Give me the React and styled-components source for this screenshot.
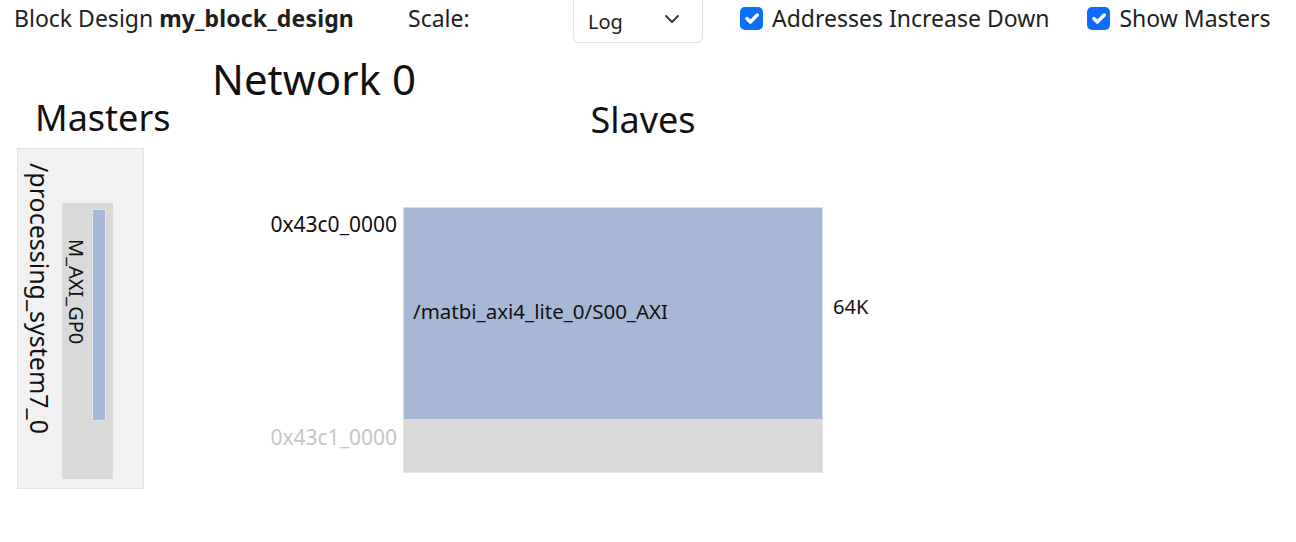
import React from "react";
//styling
import styled, { createGlobalStyle } from "styled-components";

const GlobalStyle = createGlobalStyle`
  body {
    margin: 0;
    background: #ffffff;
    color: #212529;
    font-family: "Noto Sans", "Open Sans", sans-serif;
  }
`;

const CheckMark = () => (
  <svg width="23" height="23" viewBox="0 0 20 20">
    <path
      d="m6 10 3 3 6-6"
      fill="none"
      stroke="#fff"
      strokeWidth="3"
      strokeLinecap="round"
      strokeLinejoin="round"
    />
  </svg>
);

const App = () => {
  return (
    <>
      <GlobalStyle />
      <Toolbar>
        <Title>
          Block Design <b>my_block_design</b>
        </Title>
        <ScaleLabel>Scale:</ScaleLabel>
        <Select>
          <span>Log</span>
          <svg width="16" height="16" viewBox="0 0 16 16">
            <path
              d="m2 5 6 6 6-6"
              fill="none"
              stroke="#343a40"
              strokeWidth="2"
              strokeLinecap="round"
              strokeLinejoin="round"
            />
          </svg>
        </Select>
        <Check gap={37}>
          <Box>
            <CheckMark />
          </Box>
          Addresses Increase Down
        </Check>
        <Check gap={38}>
          <Box>
            <CheckMark />
          </Box>
          Show Masters
        </Check>
      </Toolbar>
      <Main>
        <MastersCol>
          <Heading>Masters</Heading>
          <MasterPanel>
            <Vertical>/processing_system7_0</Vertical>
            <Port>
              <Vertical small>M_AXI_GP0</Vertical>
              <PortBar />
            </Port>
          </MasterPanel>
        </MastersCol>
        <NetworkCol>
          <NetworkTitle>Network 0</NetworkTitle>
          <SlavesHeading>Slaves</SlavesHeading>
          <MapRow>
            <Addr>0x43c0_0000</Addr>
            <Segment height={213} used>
              /matbi_axi4_lite_0/S00_AXI
            </Segment>
            <Size>64K</Size>
          </MapRow>
          <MapRow>
            <Addr muted>0x43c1_0000</Addr>
            <Segment height={53} />
          </MapRow>
        </NetworkCol>
      </Main>
    </>
  );
};

const Toolbar = styled.div`
  display: flex;
  align-items: center;
  height: 36px;
  padding-left: 14px;
  font-size: 23px;
  white-space: nowrap;
  color: #1e1e1e;
`;

const Title = styled.div`
  width: 394px;
  b {
    font-weight: 700;
    letter-spacing: 0.15px;
  }
`;

const ScaleLabel = styled.div`
  width: 165px;
`;

const Select = styled.div`
  box-sizing: border-box;
  display: flex;
  align-items: center;
  justify-content: space-between;
  width: 130px;
  height: 48px;
  margin-top: 2px;
  padding: 0 22px 0 14px;
  border: 1px solid #dee2e6;
  border-radius: 6px;
  font-size: 20px;
  span {
    padding-top: 4px;
  }
`;

const Check = styled.label`
  display: flex;
  align-items: center;
  gap: 9px;
  margin-left: ${(p) => p.gap}px;
`;

const Box = styled.span`
  display: flex;
  width: 23px;
  height: 23px;
  border-radius: 5px;
  background: #0d6efd;
`;

const Main = styled.div`
  display: flex;
`;

const MastersCol = styled.div`
  width: 195px;
  padding-left: 17px;
`;

const Heading = styled.h2`
  margin: 56px 0 0 18px;
  font-size: 36px;
  font-weight: 400;
  line-height: 52px;
  color: #111;
`;

const MasterPanel = styled.div`
  box-sizing: border-box;
  display: flex;
  width: 127px;
  height: 341px;
  margin-top: 4px;
  padding: 14px 0 9px 8px;
  gap: 8px;
  background: #f1f1f1;
  border: 1px solid #e3e3e3;
`;

const Vertical = styled.div`
  writing-mode: vertical-rl;
  font-size: ${(p) => (p.small ? "20px" : "25px")};
  line-height: ${(p) => (p.small ? "22px" : "28px")};
  padding-top: ${(p) => (p.small ? "30px" : "0")};
  color: #111;
`;

const Port = styled.div`
  display: flex;
  align-items: flex-start;
  gap: 5px;
  width: 51px;
  margin-top: 40px;
  padding: 6px 0 0 3px;
  box-sizing: border-box;
  background: #d9d9d9;
`;

const PortBar = styled.div`
  width: 12px;
  height: 210px;
  background: #a7b8d6;
  border: 1px solid #dfe5f0;
`;

const NetworkCol = styled.div`
  display: flex;
  flex-direction: column;
`;

const NetworkTitle = styled.h1`
  margin: 15px 0 0 0;
  font-size: 42px;
  font-weight: 400;
  line-height: 56px;
  color: #111;
`;

const SlavesHeading = styled.h2`
  width: 862px;
  margin: -13px 0 61px 0;
  text-align: center;
  font-size: 36px;
  font-weight: 400;
  line-height: 52px;
  color: #111;
`;

const MapRow = styled.div`
  display: flex;
  align-items: stretch;
`;

const Addr = styled.div`
  width: 185px;
  padding-right: 6px;
  text-align: right;
  font-size: 21px;
  line-height: 34px;
  color: ${(p) => (p.muted ? "#c6c6c6" : "#111")};
`;

const Segment = styled.div`
  box-sizing: border-box;
  display: flex;
  align-items: center;
  width: 420px;
  height: ${(p) => p.height}px;
  padding: 0 0 6px 9px;
  font-size: 20.5px;
  color: #111;
  background: ${(p) => (p.used ? "#a7b8d6" : "#d9d9d9")};
  border: 1px solid ${(p) => (p.used ? "#d6dceb" : "#e6e6e6")};
  border-top: ${(p) => (p.used ? "1px solid #d6dceb" : "0")};
`;

const Size = styled.div`
  display: flex;
  align-items: center;
  padding: 0 0 14px 10px;
  font-size: 20px;
  color: #111;
`;

export default App;
